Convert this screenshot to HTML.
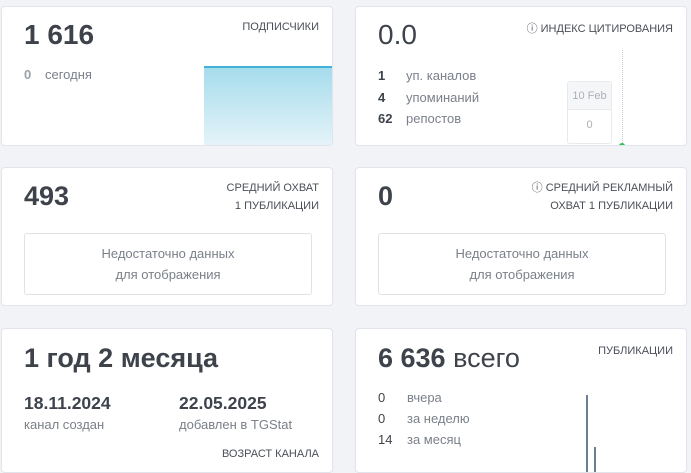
<!DOCTYPE html><html><head><meta charset="utf-8"><style>
*{margin:0;padding:0;box-sizing:border-box}
body{width:691px;height:467px;background:#f2f3f7;font-family:"Liberation Sans",sans-serif;color:#3e434b;position:relative;overflow:hidden}
.c{position:absolute;background:#fff;border:1px solid #e1e4ea;border-radius:4px;overflow:hidden}
.a{position:absolute}
.big{font-size:27px;font-weight:bold;color:#3e434b}
.lbl{font-size:11px;color:#4a4f57;text-align:right;line-height:18px}
.t{font-size:13px;color:#7b8089}
.n{font-size:13px;font-weight:bold;color:#3e434b}
.box{position:absolute;border:1px solid #dfe2e7;border-radius:3px;font-size:13px;color:#7b8089;text-align:center;line-height:21px;padding-top:9px}
</style></head><body>
<div class="c" style="left:1px;top:6px;width:332px;height:140px">
 <div class="a big" style="left:22px;top:12px;font-size:28px">1 616</div>
 <div class="a lbl" style="right:13px;top:11px">ПОДПИСЧИКИ</div>
 <div class="a n" style="left:22px;top:60px;color:#9aa0a8">0</div>
 <div class="a t" style="left:43px;top:60px">сегодня</div>
 <div class="a" style="left:202px;top:59px;width:130px;height:81px;border-top:2px solid #3fb2d6;background:linear-gradient(#a6dcec,#e6f4f9)"></div>
</div>
<div class="c" style="left:355px;top:6px;width:332px;height:140px">
 <div class="a big" style="left:22px;top:12px;font-weight:normal;font-size:28px">0.0</div>
 <div class="a lbl" style="right:13px;top:13px">&#9432; ИНДЕКС ЦИТИРОВАНИЯ</div>
 <div class="a n" style="left:22px;top:61px">1</div><div class="a t" style="left:50px;top:61px">уп. каналов</div>
 <div class="a n" style="left:22px;top:83px">4</div><div class="a t" style="left:50px;top:83px">упоминаний</div>
 <div class="a n" style="left:22px;top:104px">62</div><div class="a t" style="left:50px;top:104px">репостов</div>
 <div class="a" style="left:211px;top:74px;width:45px;height:63px;border:1px solid #e8eaee;border-radius:3px;font-size:11px;color:#aab0b8;text-align:center">
  <div style="background:#f5f6f8;height:28px;line-height:28px;border-bottom:1px solid #e8eaee">10 Feb</div><div style="line-height:30px">0</div></div>
 <div class="a" style="left:266px;top:43px;height:95px;border-left:1px dotted #c8cbd0"></div>
 <div class="a" style="left:263px;top:136px;width:6px;height:6px;border-radius:3px;background:#2fbf4f"></div>
</div>
<div class="c" style="left:1px;top:167px;width:332px;height:139px">
 <div class="a big" style="left:22px;top:13px">493</div>
 <div class="a lbl" style="right:13px;top:11px">СРЕДНИЙ ОХВАТ<br>1 ПУБЛИКАЦИИ</div>
 <div class="box" style="left:22px;top:65px;width:288px;height:62px">Недостаточно данных<br>для отображения</div>
</div>
<div class="c" style="left:355px;top:167px;width:332px;height:139px">
 <div class="a big" style="left:22px;top:13px">0</div>
 <div class="a lbl" style="right:13px;top:11px">&#9432; СРЕДНИЙ РЕКЛАМНЫЙ<br>ОХВАТ 1 ПУБЛИКАЦИИ</div>
 <div class="box" style="left:22px;top:65px;width:288px;height:62px">Недостаточно данных<br>для отображения</div>
</div>
<div class="c" style="left:1px;top:328px;width:332px;height:145px">
 <div class="a big" style="left:22px;top:14px">1 год 2 месяца</div>
 <div class="a" style="left:22px;top:64px;font-size:17.5px;font-weight:bold">18.11.2024</div>
 <div class="a t" style="left:22px;top:88px">канал создан</div>
 <div class="a" style="left:177px;top:64px;font-size:17.5px;font-weight:bold">22.05.2025</div>
 <div class="a t" style="left:177px;top:88px">добавлен в TGStat</div>
 <div class="a lbl" style="right:13px;top:116px">ВОЗРАСТ КАНАЛА</div>
</div>
<div class="c" style="left:355px;top:328px;width:332px;height:145px">
 <div class="a big" style="left:22px;top:14px">6 636 <span style="font-weight:normal">всего</span></div>
 <div class="a lbl" style="right:13px;top:13px">ПУБЛИКАЦИИ</div>
 <div class="a n" style="left:22px;top:61px;font-weight:normal">0</div><div class="a t" style="left:51px;top:61px">вчера</div>
 <div class="a n" style="left:22px;top:82px;font-weight:normal">0</div><div class="a t" style="left:51px;top:82px">за неделю</div>
 <div class="a n" style="left:22px;top:103px;font-weight:normal">14</div><div class="a t" style="left:51px;top:103px">за месяц</div>
 <div class="a" style="left:230px;top:66px;width:2px;height:80px;background:#6d7f94"></div>
 <div class="a" style="left:238px;top:118px;width:2px;height:30px;background:#6d7f94"></div>
</div>
</body></html>
